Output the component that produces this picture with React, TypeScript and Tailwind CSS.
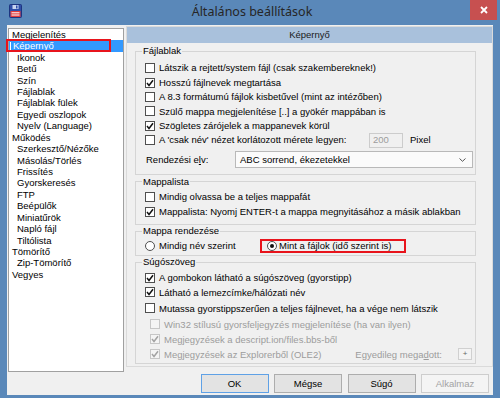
import React from 'react';

type CheckProps = { checked?: boolean; disabled?: boolean };

const Check: React.FC<CheckProps> = ({ checked, disabled }) => (
  <span
    className={`flex h-[10px] w-[10px] shrink-0 items-center justify-center border ${
      disabled ? 'border-[#c6c6c6] bg-[#f4f4f4]' : 'border-[#4f4f4f] bg-white'
    }`}
  >
    {checked && (
      <svg width="8" height="8" viewBox="0 0 8 8">
        <path d="M1 4.1 L3 6.5 L7 1.2" fill="none" stroke={disabled ? '#a2a2a2' : '#111'} strokeWidth="1.5" />
      </svg>
    )}
  </span>
);

const Radio: React.FC<{ checked?: boolean }> = ({ checked }) => (
  <span className="flex h-[10px] w-[10px] shrink-0 items-center justify-center rounded-full border border-[#4f4f4f] bg-white">
    {checked && <span className="h-[4px] w-[4px] rounded-full bg-[#111]" />}
  </span>
);

interface RowProps {
  label: React.ReactNode;
  checked?: boolean;
  disabled?: boolean;
  sub?: boolean;
  height: string;
  children?: React.ReactNode;
}

const CheckRow: React.FC<RowProps> = ({ label, checked, disabled, sub, height, children }) => (
  <div className={`flex items-center gap-[4px] ${sub ? 'pl-[14px]' : 'pl-[9px]'} ${height}`}>
    <Check checked={checked} disabled={disabled} />
    <span className={`whitespace-nowrap ${disabled ? 'text-[#9c9c9c]' : 'text-black'}`}>{label}</span>
    {children}
  </div>
);

const TREE: { name: string; level: 0 | 1; selected?: boolean }[] = [
  { name: 'Megjelenítés', level: 0 },
  { name: 'Képernyő', level: 1, selected: true },
  { name: 'Ikonok', level: 1 },
  { name: 'Betű', level: 1 },
  { name: 'Szín', level: 1 },
  { name: 'Fájlablak', level: 1 },
  { name: 'Fájlablak fülek', level: 1 },
  { name: 'Egyedi oszlopok', level: 1 },
  { name: 'Nyelv (Language)', level: 1 },
  { name: 'Működés', level: 0 },
  { name: 'Szerkesztő/Nézőke', level: 1 },
  { name: 'Másolás/Törlés', level: 1 },
  { name: 'Frissítés', level: 1 },
  { name: 'Gyorskeresés', level: 1 },
  { name: 'FTP', level: 1 },
  { name: 'Beépülők', level: 1 },
  { name: 'Miniatűrök', level: 1 },
  { name: 'Napló fájl', level: 1 },
  { name: 'Tiltólista', level: 1 },
  { name: 'Tömörítő', level: 0 },
  { name: 'Zip-Tömörítő', level: 1 },
  { name: 'Vegyes', level: 0 },
];

const FloppyIcon = () => (
  <svg width="13" height="14" viewBox="0 0 13 14">
    <rect x="0.5" y="0.5" width="12" height="13" rx="1" fill="#2f4fa8" stroke="#1d3580" />
    <rect x="3.5" y="1" width="6" height="4" fill="#c9d6f0" />
    <rect x="7" y="1.5" width="1.5" height="3" fill="#2f4fa8" />
    <rect x="1.5" y="7" width="10" height="6" fill="#e23a3a" />
    <rect x="2.5" y="8.3" width="8" height="1" fill="#fff" />
    <rect x="2.5" y="10.5" width="8" height="1" fill="#fff" />
  </svg>
);

const Button: React.FC<{ label: string; primary?: boolean; disabled?: boolean }> = ({ label, primary, disabled }) => (
  <button
    type="button"
    className={`flex h-[19px] w-[68px] items-center justify-center border ${
      disabled
        ? 'border-[#cdcdcd] bg-[#f4f4f4] text-[#a3a3a3]'
        : primary
        ? 'border-[#5fa1e6] bg-[#e3e3e3] text-black'
        : 'border-[#adadad] bg-[#e3e3e3] text-black'
    }`}
  >
    {label}
  </button>
);

export default function App() {
  return (
    <div className="flex h-[398px] w-[500px] flex-col bg-[#5a88b9] font-['Liberation_Sans',Arial,sans-serif] text-[9.5px] leading-none text-black">
      {/* title bar */}
      <div className="flex h-[25px] shrink-0">
        <div className="w-[34px] pl-[9px] pt-[4px]">
          <FloppyIcon />
        </div>
        <div className="flex flex-1 items-center justify-center pb-[1px] font-['Noto_Sans',sans-serif] text-[12.5px] text-[#262626]">
          Általános beállítások
        </div>
        <div className="mr-[3px] flex h-[20px] w-[27px] items-center justify-center bg-[#c75050]">
          <svg width="8" height="8" viewBox="0 0 8 8">
            <path d="M1 1 L7 7 M7 1 L1 7" stroke="#fff" strokeWidth="1.8" />
          </svg>
        </div>
      </div>

      {/* client area */}
      <div className="mx-[7px] mb-[3px] flex flex-1 flex-col bg-[#f0f0f0]">
        <div className="flex items-start">
          {/* tree */}
          <div className="ml-[1px] mt-[3px] h-[344px] w-[116px] border border-[#a0a0a0] bg-white text-[9.5px]">
            {TREE.map((item) =>
              item.selected ? (
                <div key={item.name} className="relative flex h-[11.43px] items-center bg-[#3399ff] pl-[1px] text-white">
                  <span className="mr-[2px] h-[9px] w-[1px] bg-white" />
                  {item.name}
                  <span className="absolute -left-[3px] -top-[1px] h-[13px] w-[105px] border-2 border-[#e8141c]" />
                </div>
              ) : (
                <div
                  key={item.name}
                  className={`flex h-[11.43px] items-center whitespace-nowrap ${item.level === 0 ? 'pl-[3px]' : 'pl-[8px]'}`}
                >
                  {item.name}
                </div>
              )
            )}
          </div>

          {/* settings page */}
          <div className="ml-[2px] mt-[1px] flex h-[341px] w-[367px] flex-col border border-[#dadada]">
            <div className="flex h-[16px] items-center justify-center bg-[#a9c1dc] text-[#1a1a1a]">Képernyő</div>
            <div className="flex flex-col px-[8px]">
              <fieldset className="mt-[2px] w-[341px] border border-[#d5d5d5] pb-[6px]">
                <legend className="ml-[6px] px-[1px] leading-[12px]">Fájlablak</legend>
                <div className="flex flex-col pt-[4px]">
                  <CheckRow height="h-[14.4px]" label="Látszik a rejtett/system fájl (csak szakembereknek!)" />
                  <CheckRow height="h-[14.4px]" checked label="Hosszú fájlnevek megtartása" />
                  <CheckRow height="h-[14.4px]" label="A 8.3 formátumú fájlok kisbetűvel (mint az intézőben)" />
                  <CheckRow height="h-[14.4px]" label="Szülő mappa megjelenítése [..] a gyökér mappában is" />
                  <CheckRow height="h-[14.4px]" checked label="Szögletes zárójelek a mappanevek körül" />
                  <div className="flex h-[14.4px] items-center pl-[9px]">
                    <Check />
                    <span className="ml-[4px] w-[210px] whitespace-nowrap">A 'csak név' nézet korlátozott mérete legyen:</span>
                    <span className="flex h-[15px] w-[34px] items-center border border-[#cccccc] bg-[#f0f0f0] pl-[3px] text-[#9c9c9c]">
                      200
                    </span>
                    <span className="ml-[7px]">Pixel</span>
                  </div>
                  <div className="mt-[4px] flex h-[17px] items-center pl-[10px]">
                    <span className="w-[89px] whitespace-nowrap">
                      Rendezési e<span className="underline">l</span>v:
                    </span>
                    <div className="flex h-[17px] w-[238px] items-center justify-between border border-[#b9b9b9] bg-[#fbfbfb] pl-[4px] pr-[6px]">
                      <span>ABC sorrend, ékezetekkel</span>
                      <svg width="7" height="4" viewBox="0 0 7 4">
                        <path d="M0.5 0.5 L3.5 3.3 L6.5 0.5" fill="none" stroke="#555" strokeWidth="1" />
                      </svg>
                    </div>
                  </div>
                </div>
              </fieldset>

              <fieldset className="mt-[0.5px] w-[341px] border border-[#d5d5d5] pb-[5px]">
                <legend className="ml-[6px] px-[1px] leading-[12px]">Mappalista</legend>
                <div className="flex flex-col pt-[1.5px]">
                  <CheckRow height="h-[15px]" label="Mindig olvassa be a teljes mappafát" />
                  <CheckRow height="h-[15px]" checked label="Mappalista: Nyomj ENTER-t a mappa megnyitásához a másik ablakban" />
                </div>
              </fieldset>

              <fieldset className="w-[341px] border border-[#d5d5d5] pb-[2.5px]">
                <legend className="ml-[6px] px-[1px] leading-[12px]">Mappa rendezése</legend>
                <div className="mt-[1.5px] flex h-[14px] items-center pl-[9px]">
                  <div className="flex w-[115px] items-center gap-[4px]">
                    <Radio />
                    <span className="whitespace-nowrap">Mindig név szerint</span>
                  </div>
                  <div className="flex h-[14px] w-[146px] items-center gap-[2px] border-2 border-[#e8141c] pl-[5px]">
                    <Radio checked />
                    <span className="whitespace-nowrap">Mint a fájlok (idő szerint is)</span>
                  </div>
                </div>
              </fieldset>

              <fieldset className="w-[341px] border border-[#d5d5d5] pb-[1px]">
                <legend className="ml-[6px] px-[1px] leading-[12px]">Súgószöveg</legend>
                <div className="flex flex-col pt-[2.5px]">
                  <CheckRow height="h-[14px]" checked label="A gombokon látható a súgószöveg (gyorstipp)" />
                  <CheckRow height="h-[15px]" checked label="Látható a lemezcímke/hálózati név" />
                  <CheckRow height="h-[17px]" label="Mutassa gyorstippszerűen a teljes fájlnevet, ha a vége nem látszik" />
                  <CheckRow height="h-[15px]" sub disabled label="Win32 stílusú gyorsfeljegyzés megjelenítése (ha van ilyen)" />
                  <CheckRow height="h-[15px]" sub disabled checked label="Megjegyzések a descript.ion/files.bbs-ből" />
                  <CheckRow height="h-[15px]" sub disabled checked label="Megjegyzések az Explorerből (OLE2)">
                    <div className="ml-auto mr-[3px] flex items-center gap-[16px]">
                      <span className="whitespace-nowrap text-[#9c9c9c]">
                        Egyedileg mega<span className="underline">d</span>ott:
                      </span>
                      <span className="flex h-[12px] w-[14px] items-center justify-center border border-[#d0d0d0] bg-[#f4f4f4] text-[8px] text-[#666]">
                        +
                      </span>
                    </div>
                  </CheckRow>
                </div>
              </fieldset>
            </div>
          </div>
        </div>

        {/* buttons */}
        <div className="mt-[2px] flex justify-end gap-[5.5px] pr-[4px]">
          <Button label="OK" primary />
          <Button label="Mégse" />
          <Button label="Súgó" />
          <Button label="Alkalmaz" disabled />
        </div>
      </div>
    </div>
  );
}
